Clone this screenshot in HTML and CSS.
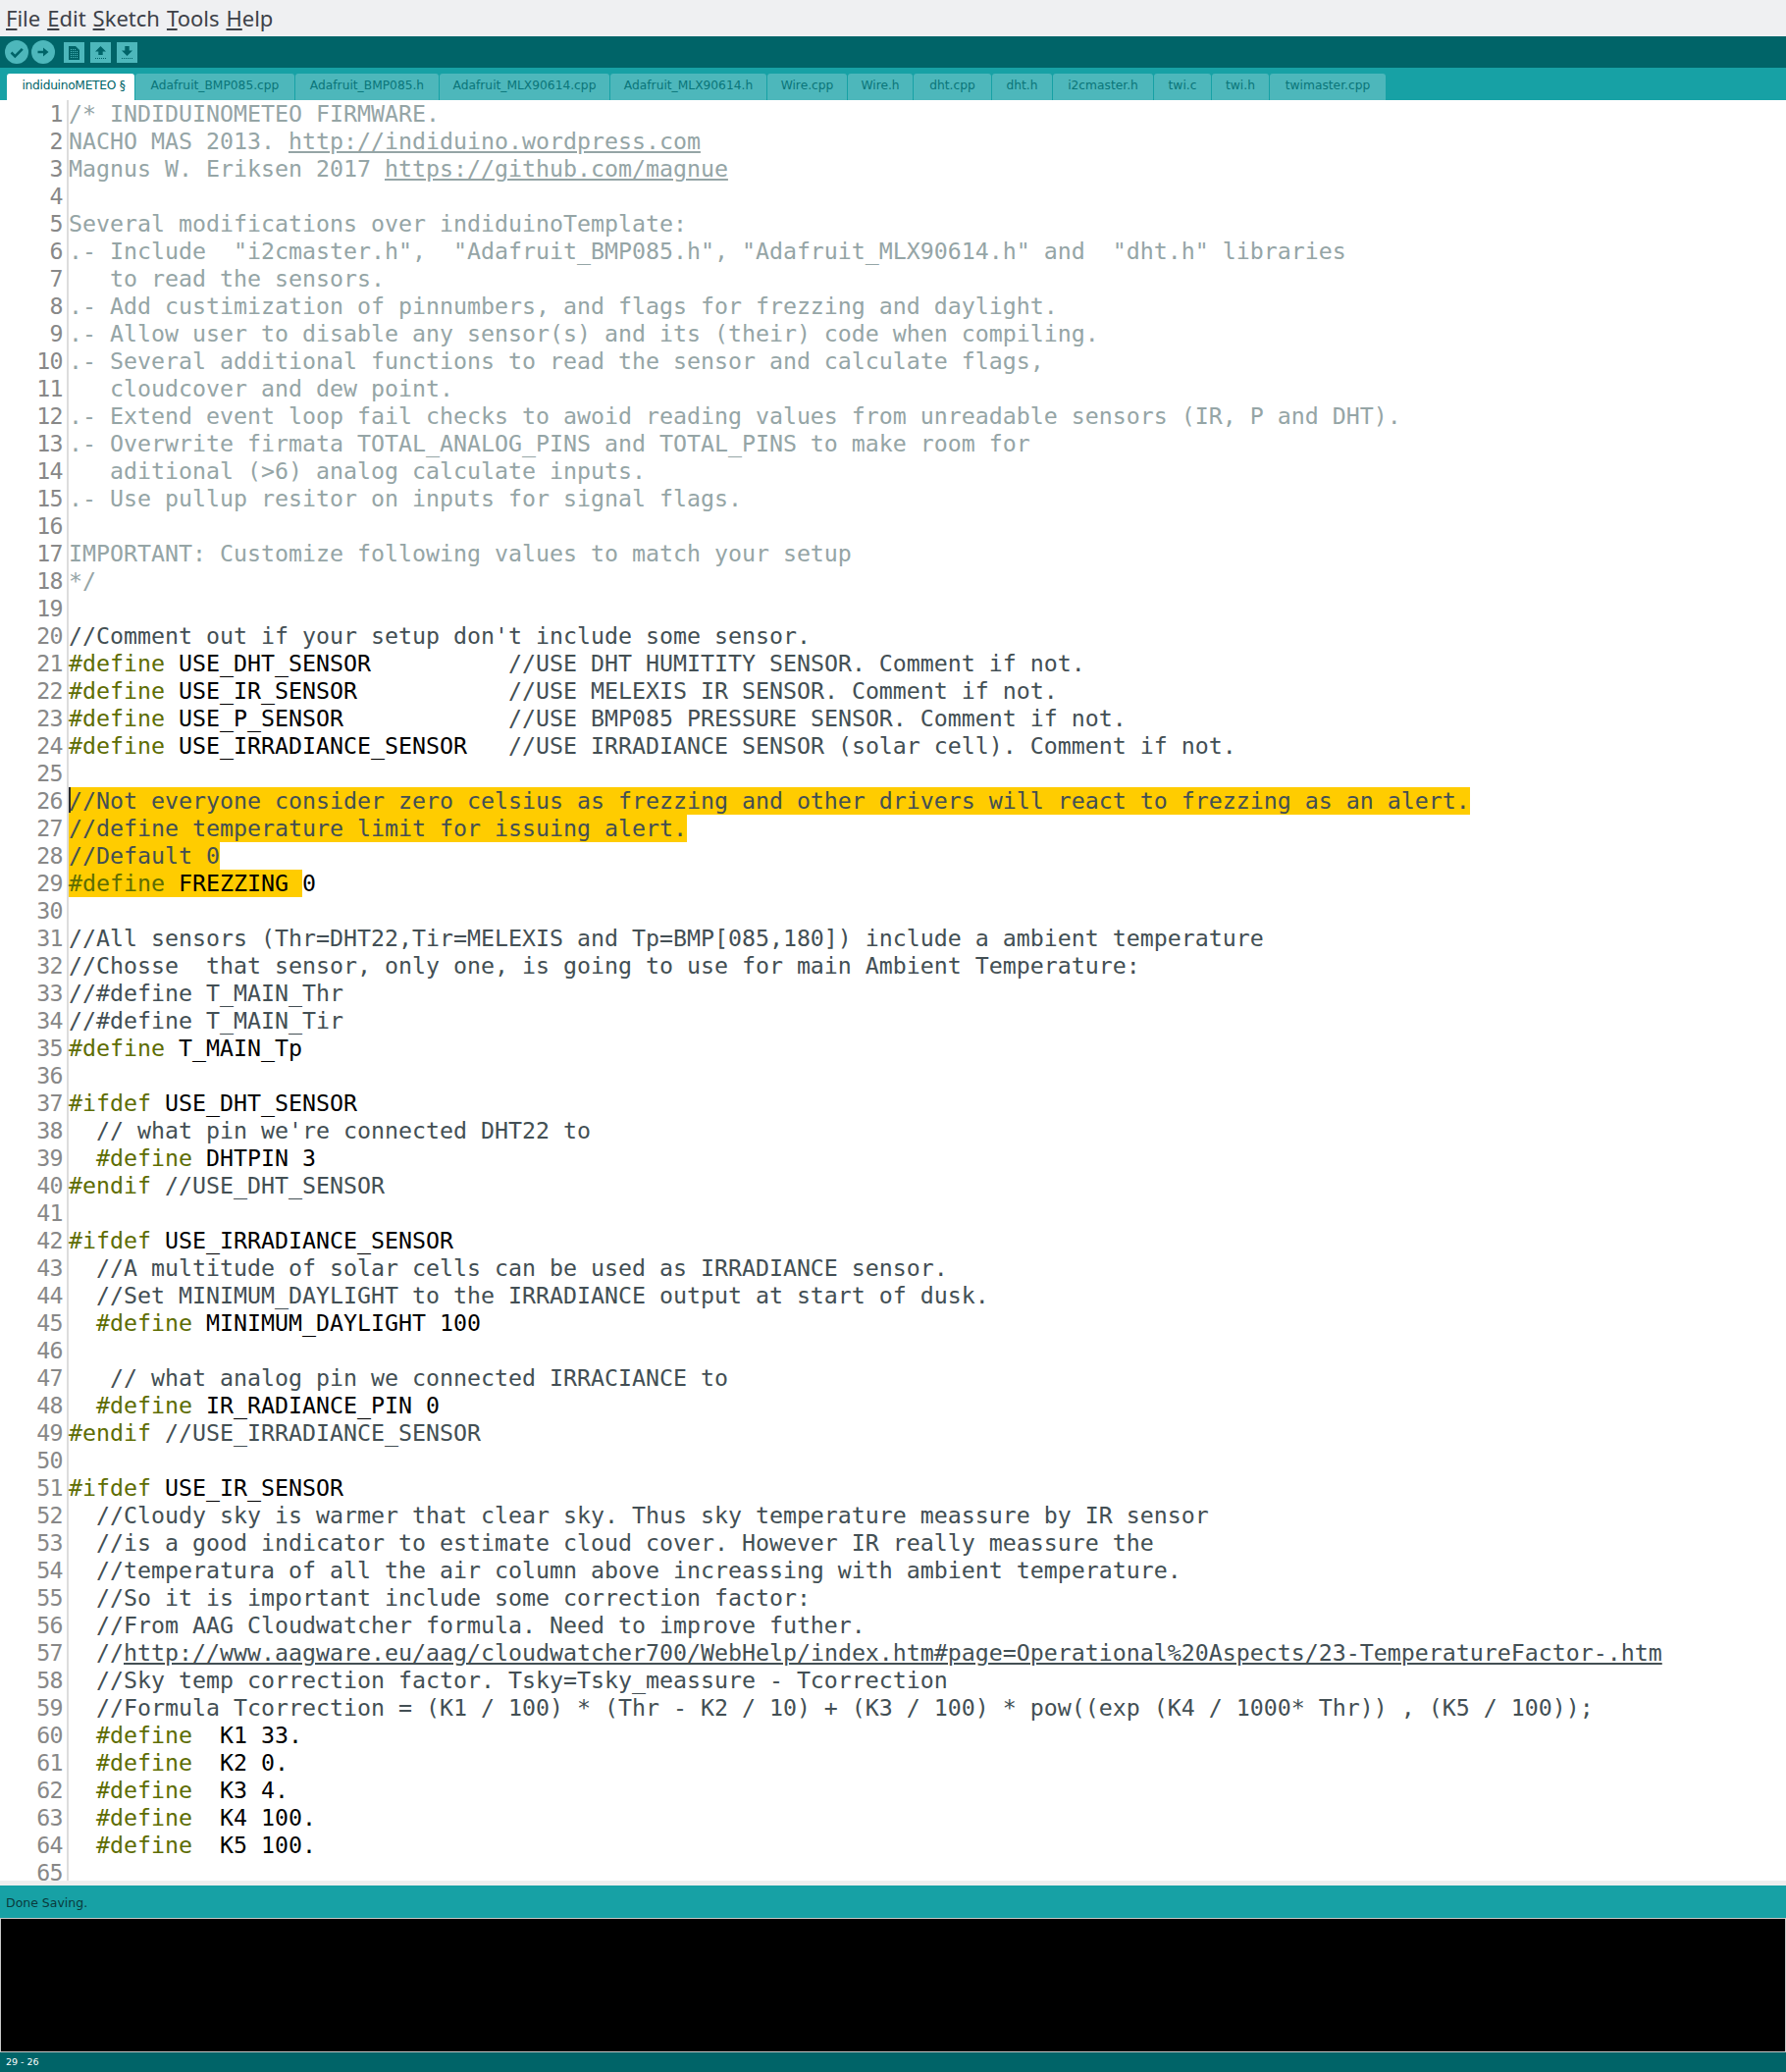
FILE: index.html
```html
<!DOCTYPE html>
<html lang="en">
<head>
<meta charset="utf-8">
<title>indiduinoMETEO | Arduino</title>
<link rel="stylesheet" href="styles.css">
</head>
<body>
<div class="app">
<nav class="menubar"><span><u>F</u>ile</span><span><u>E</u>dit</span><span><u>S</u>ketch</span><span><u>T</u>ools</span><span><u>H</u>elp</span></nav>
<div class="toolbar">
<svg class="btn round" viewBox="0 0 24 24"><circle cx="12" cy="12" r="12" fill="#4db7bb"/><path d="M6.5 12.5l3.8 3.8 7.5-7.5" fill="none" stroke="#006468" stroke-width="2.6"/></svg>
<svg class="btn round" viewBox="0 0 24 24"><circle cx="12" cy="12" r="12" fill="#4db7bb"/><path d="M6.5 10.7h5.500V7.500l5.500 4.500-5.500 4.500v-3.200H6.500z" fill="#006468"/></svg>
<svg class="btn square first" viewBox="0 0 21 21"><rect width="21" height="21" fill="#4db7bb"/><path d="M5 4h7l4 4v10H5z" fill="#006468"/><path d="M7 7.500h5M7 9.500h7M7 11.500h7M7 13.500h7M7 15.500h7" stroke="#4db7bb" stroke-width="1" stroke-dasharray="1 1"/></svg>
<svg class="btn square" viewBox="0 0 21 21"><rect width="21" height="21" fill="#4db7bb"/><path d="M10.500 4l5.500 5.500h-3.300V13H8.300V9.500H5z" fill="#006468"/><path d="M5 16.500h11" stroke="#006468" stroke-width="1" stroke-dasharray="1 1"/></svg>
<svg class="btn square" viewBox="0 0 21 21"><rect width="21" height="21" fill="#4db7bb"/><path d="M10.500 14L5 8.500h3.300V4h4.400v4.500H16z" fill="#006468"/><path d="M5 16.500h11" stroke="#006468" stroke-width="1" stroke-dasharray="1 1"/></svg>
</div>
<div class="tabs">
<span class="tab active">indiduinoMETEO §</span><span class="tab">Adafruit_BMP085.cpp</span><span class="tab">Adafruit_BMP085.h</span><span class="tab">Adafruit_MLX90614.cpp</span><span class="tab">Adafruit_MLX90614.h</span><span class="tab">Wire.cpp</span><span class="tab">Wire.h</span><span class="tab">dht.cpp</span><span class="tab">dht.h</span><span class="tab">i2cmaster.h</span><span class="tab">twi.c</span><span class="tab">twi.h</span><span class="tab">twimaster.cpp</span>
</div>
<main class="editor">
<div class="gutter">
<div>1</div><div>2</div><div>3</div><div>4</div><div>5</div><div>6</div><div>7</div><div>8</div><div>9</div><div>10</div><div>11</div><div>12</div><div>13</div><div>14</div><div>15</div><div>16</div><div>17</div><div>18</div><div>19</div><div>20</div><div>21</div><div>22</div><div>23</div><div>24</div><div>25</div><div>26</div><div>27</div><div>28</div><div>29</div><div>30</div><div>31</div><div>32</div><div>33</div><div>34</div><div>35</div><div>36</div><div>37</div><div>38</div><div>39</div><div>40</div><div>41</div><div>42</div><div>43</div><div>44</div><div>45</div><div>46</div><div>47</div><div>48</div><div>49</div><div>50</div><div>51</div><div>52</div><div>53</div><div>54</div><div>55</div><div>56</div><div>57</div><div>58</div><div>59</div><div>60</div><div>61</div><div>62</div><div>63</div><div>64</div><div>65</div>
</div>
<div class="code">
<div class="b">/* INDIDUINOMETEO FIRMWARE.</div>
<div class="b">NACHO MAS 2013. <u>http://indiduino.wordpress.com</u></div>
<div class="b">Magnus W. Eriksen 2017 <u>https://github.com/magnue</u></div>
<div class="b"></div>
<div class="b">Several modifications over indiduinoTemplate:</div>
<div class="b">.- Include  "i2cmaster.h",  "Adafruit_BMP085.h", "Adafruit_MLX90614.h" and  "dht.h" libraries</div>
<div class="b">   to read the sensors.</div>
<div class="b">.- Add custimization of pinnumbers, and flags for frezzing and daylight.</div>
<div class="b">.- Allow user to disable any sensor(s) and its (their) code when compiling.</div>
<div class="b">.- Several additional functions to read the sensor and calculate flags,</div>
<div class="b">   cloudcover and dew point.</div>
<div class="b">.- Extend event loop fail checks to awoid reading values from unreadable sensors (IR, P and DHT).</div>
<div class="b">.- Overwrite firmata TOTAL_ANALOG_PINS and TOTAL_PINS to make room for</div>
<div class="b">   aditional (&gt;6) analog calculate inputs.</div>
<div class="b">.- Use pullup resitor on inputs for signal flags.</div>
<div class="b"></div>
<div class="b">IMPORTANT: Customize following values to match your setup</div>
<div class="b">*/</div>
<div></div>
<div class="c">//Comment out if your setup don't include some sensor.</div>
<div><span class="k">#define</span> USE_DHT_SENSOR          <span class="c">//USE DHT HUMITITY SENSOR. Comment if not.</span></div>
<div><span class="k">#define</span> USE_IR_SENSOR           <span class="c">//USE MELEXIS IR SENSOR. Comment if not.</span></div>
<div><span class="k">#define</span> USE_P_SENSOR            <span class="c">//USE BMP085 PRESSURE SENSOR. Comment if not.</span></div>
<div><span class="k">#define</span> USE_IRRADIANCE_SENSOR   <span class="c">//USE IRRADIANCE SENSOR (solar cell). Comment if not.</span></div>
<div></div>
<div class="c caret-line"><span class="sel">//Not everyone consider zero celsius as frezzing and other drivers will react to frezzing as an alert.</span><i class="caret"></i></div>
<div class="c"><span class="sel">//define temperature limit for issuing alert.</span></div>
<div class="c"><span class="sel">//Default 0</span></div>
<div><span class="sel"><span class="k">#define</span> FREZZING </span>0</div>
<div></div>
<div class="c">//All sensors (Thr=DHT22,Tir=MELEXIS and Tp=BMP[085,180]) include a ambient temperature</div>
<div class="c">//Chosse  that sensor, only one, is going to use for main Ambient Temperature:</div>
<div class="c">//#define T_MAIN_Thr</div>
<div class="c">//#define T_MAIN_Tir</div>
<div><span class="k">#define</span> T_MAIN_Tp</div>
<div></div>
<div><span class="k">#ifdef</span> USE_DHT_SENSOR</div>
<div class="c">  // what pin we're connected DHT22 to</div>
<div>  <span class="k">#define</span> DHTPIN 3</div>
<div><span class="k">#endif</span> <span class="c">//USE_DHT_SENSOR</span></div>
<div></div>
<div><span class="k">#ifdef</span> USE_IRRADIANCE_SENSOR</div>
<div class="c">  //A multitude of solar cells can be used as IRRADIANCE sensor.</div>
<div class="c">  //Set MINIMUM_DAYLIGHT to the IRRADIANCE output at start of dusk.</div>
<div>  <span class="k">#define</span> MINIMUM_DAYLIGHT 100</div>
<div></div>
<div class="c">   // what analog pin we connected IRRACIANCE to</div>
<div>  <span class="k">#define</span> IR_RADIANCE_PIN 0</div>
<div><span class="k">#endif</span> <span class="c">//USE_IRRADIANCE_SENSOR</span></div>
<div></div>
<div><span class="k">#ifdef</span> USE_IR_SENSOR</div>
<div class="c">  //Cloudy sky is warmer that clear sky. Thus sky temperature meassure by IR sensor</div>
<div class="c">  //is a good indicator to estimate cloud cover. However IR really meassure the</div>
<div class="c">  //temperatura of all the air column above increassing with ambient temperature.</div>
<div class="c">  //So it is important include some correction factor:</div>
<div class="c">  //From AAG Cloudwatcher formula. Need to improve futher.</div>
<div class="c">  //<u>http://www.aagware.eu/aag/cloudwatcher700/WebHelp/index.htm#page=Operational%20Aspects/23-TemperatureFactor-.htm</u></div>
<div class="c">  //Sky temp correction factor. Tsky=Tsky_meassure - Tcorrection</div>
<div class="c">  //Formula Tcorrection = (K1 / 100) * (Thr - K2 / 10) + (K3 / 100) * pow((exp (K4 / 1000* Thr)) , (K5 / 100));</div>
<div>  <span class="k">#define</span>  K1 33.</div>
<div>  <span class="k">#define</span>  K2 0.</div>
<div>  <span class="k">#define</span>  K3 4.</div>
<div>  <span class="k">#define</span>  K4 100.</div>
<div>  <span class="k">#define</span>  K5 100.</div>
<div></div>
</div>
</main>
<div class="divider"></div>
<div class="status">Done Saving.</div>
<div class="console"></div>
<footer class="footer">29 - 26</footer>
</div>
</body>
</html>
```
FILE: styles.css
```css
* { box-sizing: border-box; }
html, body { margin: 0; padding: 0; background: #fff; }
.app { width: 1820px; height: 2111px; display: flex; flex-direction: column; overflow: hidden; }
.menubar { height: 37px; flex: none; background: #eff0f2; display: flex; gap: 7px; padding-left: 6px; align-items: center; font: 22px/37px "Noto Sans", sans-serif; color: #3d4148; }
.toolbar { height: 32px; flex: none; background: #006468; display: flex; align-items: center; padding-left: 5px; gap: 3px; }
.btn { display: block; flex: none; }
.round { width: 24px; height: 24px; }
.square { width: 21px; height: 21px; margin-left: 3px; }
.square.first { margin-left: 6px; }
.tabs { height: 33px; flex: none; background: #17a1a5; display: grid; grid-template-columns: 130px 162px 146px 173px 159px 81px 66px 79px 61px 102px 58px 58px 118px; gap: 1px; padding: 6px 0 0 7px; align-items: stretch; }
.tab { background: #4db7bb; color: #0a7579; border-radius: 3px 3px 0 0; font: 12.25px/25px "DejaVu Sans", sans-serif; text-align: center; white-space: nowrap; overflow: hidden; }
.tab.active { background: #fff; color: #006468; padding-left: 6px; letter-spacing: -0.3px; }
.editor { flex: none; height: 1814px; overflow: hidden; display: flex; background: #fff; font: 23.25px/28px "DejaVu Sans Mono", monospace; color: #000; }
.gutter { width: 70px; flex: none; border-right: 2px solid #ddd; padding-right: 4px; text-align: right; color: #888; letter-spacing: -0.6px; }
.gutter div { height: 28px; }
.code { flex: 1; }
.code > div { height: 28px; position: relative; white-space: pre; }
.b { color: #95a5a6; }
.c { color: #434f54; }
.k { color: #5e6d03; }
.sel { display: inline-block; height: 28px; background: #ffcc00; vertical-align: top; }
.caret { position: absolute; left: 0; top: 0; width: 2px; height: 26px; background: #2b2b2b; }
.divider { height: 5px; flex: none; background: #eee; }
.status { height: 33px; flex: none; background: #17a1a5; color: #0a3a3c; padding-left: 6px; font: 12.5px/35px "DejaVu Sans", sans-serif; }
.console { height: 137px; flex: none; background: #000; border: 1px solid #c8c8c8; }
.footer { height: 20px; flex: none; background: #006468; color: #fff; padding-left: 6px; font: 9.5px/20px "DejaVu Sans", sans-serif; }
```
